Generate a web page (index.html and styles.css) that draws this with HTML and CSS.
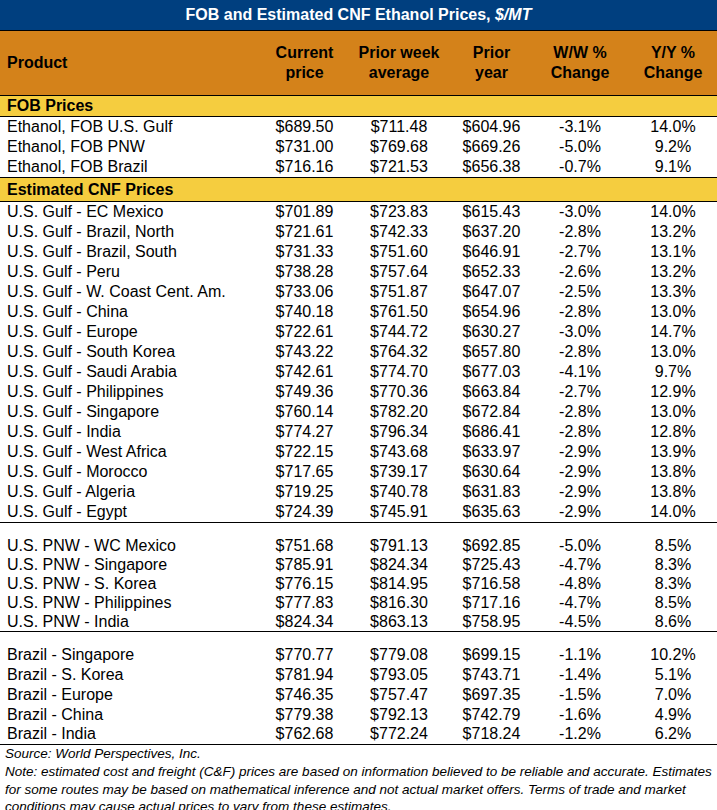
FILE: index.html
```html
<!DOCTYPE html>
<html>
<head>
<meta charset="utf-8">
<link rel="stylesheet" href="styles.css">
</head>
<body>
<div class="sheet">
  <div class="title">FOB and Estimated CNF Ethanol Prices, <i>$/MT</i></div>
  <table class="prices">
    <colgroup>
      <col class="c-prod"><col class="c-cur"><col class="c-week"><col class="c-year"><col class="c-ww"><col class="c-yy">
    </colgroup>
    <thead>
      <tr class="head">
        <th class="prod">Product</th>
        <th>Current<br>price</th>
        <th>Prior week<br>average</th>
        <th>Prior<br>year</th>
        <th>W/W %<br>Change</th>
        <th>Y/Y %<br>Change</th>
      </tr>
    </thead>
    <tbody>
      <tr class="section"><td colspan="6">FOB Prices</td></tr>
      <tr><td>Ethanol, FOB U.S. Gulf</td><td>$689.50</td><td>$711.48</td><td>$604.96</td><td>-3.1%</td><td>14.0%</td></tr>
      <tr><td>Ethanol, FOB PNW</td><td>$731.00</td><td>$769.68</td><td>$669.26</td><td>-5.0%</td><td>9.2%</td></tr>
      <tr><td>Ethanol, FOB Brazil</td><td>$716.16</td><td>$721.53</td><td>$656.38</td><td>-0.7%</td><td>9.1%</td></tr>
      <tr class="section tall"><td colspan="6">Estimated CNF Prices</td></tr>
      <tr><td>U.S. Gulf - EC Mexico</td><td>$701.89</td><td>$723.83</td><td>$615.43</td><td>-3.0%</td><td>14.0%</td></tr>
      <tr><td>U.S. Gulf - Brazil, North</td><td>$721.61</td><td>$742.33</td><td>$637.20</td><td>-2.8%</td><td>13.2%</td></tr>
      <tr><td>U.S. Gulf - Brazil, South</td><td>$731.33</td><td>$751.60</td><td>$646.91</td><td>-2.7%</td><td>13.1%</td></tr>
      <tr><td>U.S. Gulf - Peru</td><td>$738.28</td><td>$757.64</td><td>$652.33</td><td>-2.6%</td><td>13.2%</td></tr>
      <tr><td>U.S. Gulf - W. Coast Cent. Am.</td><td>$733.06</td><td>$751.87</td><td>$647.07</td><td>-2.5%</td><td>13.3%</td></tr>
      <tr><td>U.S. Gulf - China</td><td>$740.18</td><td>$761.50</td><td>$654.96</td><td>-2.8%</td><td>13.0%</td></tr>
      <tr><td>U.S. Gulf - Europe</td><td>$722.61</td><td>$744.72</td><td>$630.27</td><td>-3.0%</td><td>14.7%</td></tr>
      <tr><td>U.S. Gulf - South Korea</td><td>$743.22</td><td>$764.32</td><td>$657.80</td><td>-2.8%</td><td>13.0%</td></tr>
      <tr><td>U.S. Gulf - Saudi Arabia</td><td>$742.61</td><td>$774.70</td><td>$677.03</td><td>-4.1%</td><td>9.7%</td></tr>
      <tr><td>U.S. Gulf - Philippines</td><td>$749.36</td><td>$770.36</td><td>$663.84</td><td>-2.7%</td><td>12.9%</td></tr>
      <tr><td>U.S. Gulf - Singapore</td><td>$760.14</td><td>$782.20</td><td>$672.84</td><td>-2.8%</td><td>13.0%</td></tr>
      <tr><td>U.S. Gulf - India</td><td>$774.27</td><td>$796.34</td><td>$686.41</td><td>-2.8%</td><td>12.8%</td></tr>
      <tr><td>U.S. Gulf - West Africa</td><td>$722.15</td><td>$743.68</td><td>$633.97</td><td>-2.9%</td><td>13.9%</td></tr>
      <tr><td>U.S. Gulf - Morocco</td><td>$717.65</td><td>$739.17</td><td>$630.64</td><td>-2.9%</td><td>13.8%</td></tr>
      <tr><td>U.S. Gulf - Algeria</td><td>$719.25</td><td>$740.78</td><td>$631.83</td><td>-2.9%</td><td>13.8%</td></tr>
      <tr class="group-end"><td>U.S. Gulf - Egypt</td><td>$724.39</td><td>$745.91</td><td>$635.63</td><td>-2.9%</td><td>14.0%</td></tr>
      <tr class="spacer"><td colspan="6"></td></tr>
      <tr class="tight"><td>U.S. PNW - WC Mexico</td><td>$751.68</td><td>$791.13</td><td>$692.85</td><td>-5.0%</td><td>8.5%</td></tr>
      <tr class="tight"><td>U.S. PNW - Singapore</td><td>$785.91</td><td>$824.34</td><td>$725.43</td><td>-4.7%</td><td>8.3%</td></tr>
      <tr class="tight"><td>U.S. PNW - S. Korea</td><td>$776.15</td><td>$814.95</td><td>$716.58</td><td>-4.8%</td><td>8.3%</td></tr>
      <tr class="tight"><td>U.S. PNW - Philippines</td><td>$777.83</td><td>$816.30</td><td>$717.16</td><td>-4.7%</td><td>8.5%</td></tr>
      <tr class="tight group-end"><td>U.S. PNW - India</td><td>$824.34</td><td>$863.13</td><td>$758.95</td><td>-4.5%</td><td>8.6%</td></tr>
      <tr class="spacer"><td colspan="6"></td></tr>
      <tr><td>Brazil - Singapore</td><td>$770.77</td><td>$779.08</td><td>$699.15</td><td>-1.1%</td><td>10.2%</td></tr>
      <tr><td>Brazil - S. Korea</td><td>$781.94</td><td>$793.05</td><td>$743.71</td><td>-1.4%</td><td>5.1%</td></tr>
      <tr><td>Brazil - Europe</td><td>$746.35</td><td>$757.47</td><td>$697.35</td><td>-1.5%</td><td>7.0%</td></tr>
      <tr class="tight"><td>Brazil - China</td><td>$779.38</td><td>$792.13</td><td>$742.79</td><td>-1.6%</td><td>4.9%</td></tr>
      <tr class="group-end"><td>Brazil - India</td><td>$762.68</td><td>$772.24</td><td>$718.24</td><td>-1.2%</td><td>6.2%</td></tr>
    </tbody>
  </table>
  <div class="notes">
    <p>Source: World Perspectives, Inc.</p>
    <p>Note: estimated cost and freight (C&amp;F) prices are based on information believed to be reliable and accurate. Estimates<br>for some routes may be based on mathematical inference and not actual market offers. Terms of trade and market<br>conditions may cause actual prices to vary from these estimates.</p>
  </div>
</div>
</body>
</html>
```

FILE: styles.css
```css
html, body {
  margin: 0;
  padding: 0;
  background: #ffffff;
}

.sheet {
  width: 717px;
  font-family: "Liberation Sans", Arial, sans-serif;
  color: #000000;
}

.title {
  height: 30px;
  line-height: 30px;
  background: #003f7f;
  color: #ffffff;
  font-weight: bold;
  font-size: 16px;
  text-align: center;
  border-bottom: 1px solid #000000;
}

.prices {
  width: 717px;
  border-collapse: collapse;
  table-layout: fixed;
  font-size: 16px;
}

.c-prod { width: 263px; }
.c-cur { width: 83px; }
.c-week { width: 106px; }
.c-year { width: 79px; }
.c-ww { width: 98px; }
.c-yy { width: 88px; }

.head th {
  background: #d4821a;
  height: 64px;
  padding: 0;
  font-weight: bold;
  line-height: 20px;
  text-align: center;
  vertical-align: middle;
  border-bottom: 1px solid #000000;
}

.head th.prod {
  text-align: left;
  padding-left: 7px;
}

.prices td {
  height: 20px;
  padding: 0;
  line-height: 20px;
  text-align: center;
  white-space: nowrap;
}

.prices td:first-child {
  text-align: left;
  padding-left: 7px;
}

.section td {
  background: #f5cd3f;
  font-weight: bold;
  height: 20px;
  border-top: 1px solid #000000;
  border-bottom: 1px solid #000000;
}

.section.tall td {
  height: 23px;
  line-height: 21px;
}

.tight td {
  height: 19px;
  line-height: 19px;
}

.group-end td {
  border-bottom: 1px solid #000000;
}

.spacer td {
  height: 13px;
  line-height: 13px;
}

.notes {
  font-size: 13.5px;
  font-style: italic;
  line-height: 18px;
  padding: 0 0 0 5px;
}

.notes p {
  margin: 0;
  white-space: nowrap;
}

.notes p + p {
  line-height: 17.5px;
}
```
